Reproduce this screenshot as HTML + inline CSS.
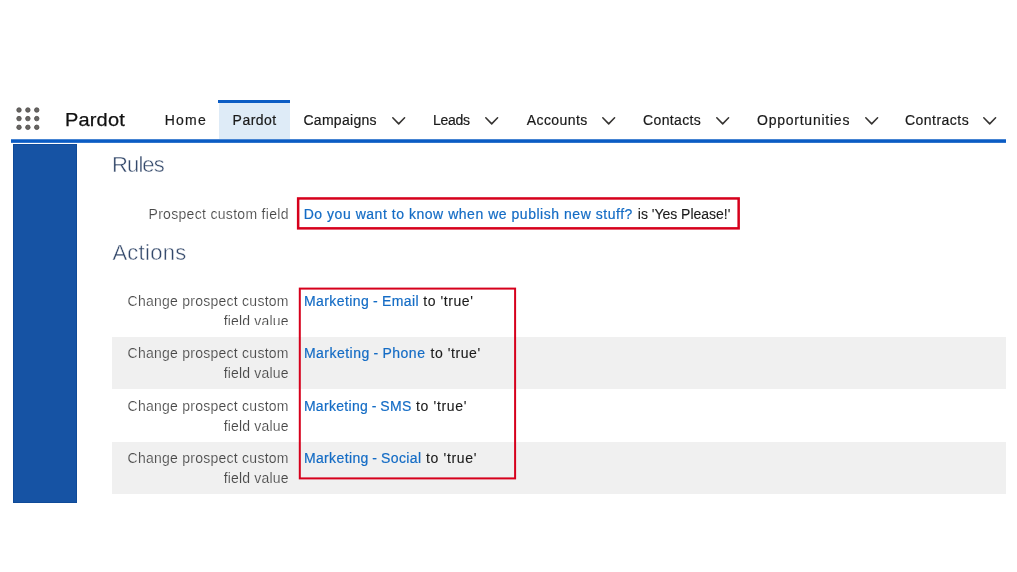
<!DOCTYPE html>
<html>
<head>
<meta charset="utf-8">
<title>Pardot</title>
<style>
html,body{margin:0;padding:0;background:#fff;}
body{width:1017px;height:572px;position:relative;overflow:hidden;font-family:"Liberation Sans",sans-serif;color:#1b1b1b;}
#wrap{position:absolute;left:0;top:0;width:1017px;height:572px;will-change:transform;}
.abs{position:absolute;white-space:nowrap;}
#topline{left:11px;top:139px;width:995px;height:4px;background:linear-gradient(to bottom,rgba(11,92,196,0.75) 0,rgba(11,92,196,0.75) 1px,#0b5cc4 1px,#0b5cc4 3px,rgba(11,92,196,0.85) 3px,rgba(11,92,196,0.85) 4px);}
#sidebar{left:13px;top:144px;width:64px;height:359px;background:#1653a4;box-sizing:border-box;border:1px solid #0f4a98;}
#acttab{left:219px;top:100px;width:71px;height:39px;background:#deebf7;}
#actbar{left:218px;top:100px;width:72px;height:3px;background:#0b5cc4;}
.nav{font-size:14px;color:#1a1a1a;line-height:20px;-webkit-text-stroke:0.2px #1a1a1a;}
.app{font-size:18.5px;color:#111;-webkit-text-stroke:0.25px #111;line-height:26px;transform:scaleX(1.08);transform-origin:0 0;}
.h{font-size:22px;color:#33486a;-webkit-text-stroke:0.45px #fff;line-height:28px;font-weight:normal;margin:0;}
.lbl{font-size:14px;color:#484848;-webkit-text-stroke:0.15px #fff;line-height:19.7px;text-align:right;}
.val{font-size:14px;line-height:20px;color:#1b1b1b;-webkit-text-stroke:0.12px #1b1b1b;}
.val a{color:#146cc5;text-decoration:none;-webkit-text-stroke:0.2px #146cc5;}
.ws a{word-spacing:-0.6px;}
.g{-webkit-text-stroke-color:#f0f0f0;}
.row{left:112px;width:894px;background:#f0f0f0;}
svg{position:absolute;overflow:visible;}
</style>
</head>
<body>
<div id="wrap">
<div class="abs" id="acttab"></div>
<div class="abs" id="actbar"></div>
<div class="abs" id="topline"></div>
<div class="abs" id="sidebar"></div>

<svg id="dots" style="left:16.35px;top:107.2px" width="24" height="24" viewBox="0 0 24 24" fill="#686664" stroke="#4c4a48" stroke-width="0.8">
<circle cx="3" cy="3" r="2.25"/><circle cx="11.87" cy="3" r="2.25"/><circle cx="20.74" cy="3" r="2.25"/>
<circle cx="3" cy="11.6" r="2.25"/><circle cx="11.87" cy="11.6" r="2.25"/><circle cx="20.74" cy="11.6" r="2.25"/>
<circle cx="3" cy="20.3" r="2.25"/><circle cx="11.87" cy="20.3" r="2.25"/><circle cx="20.74" cy="20.3" r="2.25"/>
</svg>

<div class="abs app" id="app" style="left:65.1px;top:107px;letter-spacing:0.16px">Pardot</div>
<div class="abs nav" id="n1" style="left:164.8px;top:110px;letter-spacing:1.2px">Home</div>
<div class="abs nav" id="n2" style="left:232.6px;top:110px;letter-spacing:0.46px">Pardot</div>
<div class="abs nav" id="n3" style="left:303.4px;top:110px;letter-spacing:0.3px">Campaigns</div>
<div class="abs nav" id="n4" style="left:432.9px;top:110px;letter-spacing:-0.24px">Leads</div>
<div class="abs nav" id="n5" style="left:526.7px;top:110px;letter-spacing:0.44px">Accounts</div>
<div class="abs nav" id="n6" style="left:643.0px;top:110px;letter-spacing:0.37px">Contacts</div>
<div class="abs nav" id="n7" style="left:757.0px;top:110px;letter-spacing:0.76px">Opportunities</div>
<div class="abs nav" id="n8" style="left:904.9px;top:110px;letter-spacing:0.49px">Contracts</div>
<svg style="left:391.8px;top:117px" width="13.4" height="7.8" viewBox="0 0 13.4 7.8"><path d="M0.8 0.8 L6.7 6.9 L12.6 0.8" fill="none" stroke="#363432" stroke-width="1.55" stroke-linecap="round" stroke-linejoin="round"/></svg><svg style="left:485.4px;top:117px" width="13.4" height="7.8" viewBox="0 0 13.4 7.8"><path d="M0.8 0.8 L6.7 6.9 L12.6 0.8" fill="none" stroke="#363432" stroke-width="1.55" stroke-linecap="round" stroke-linejoin="round"/></svg><svg style="left:602.4px;top:117px" width="13.4" height="7.8" viewBox="0 0 13.4 7.8"><path d="M0.8 0.8 L6.7 6.9 L12.6 0.8" fill="none" stroke="#363432" stroke-width="1.55" stroke-linecap="round" stroke-linejoin="round"/></svg><svg style="left:715.7px;top:117px" width="13.4" height="7.8" viewBox="0 0 13.4 7.8"><path d="M0.8 0.8 L6.7 6.9 L12.6 0.8" fill="none" stroke="#363432" stroke-width="1.55" stroke-linecap="round" stroke-linejoin="round"/></svg><svg style="left:864.5px;top:117px" width="13.4" height="7.8" viewBox="0 0 13.4 7.8"><path d="M0.8 0.8 L6.7 6.9 L12.6 0.8" fill="none" stroke="#363432" stroke-width="1.55" stroke-linecap="round" stroke-linejoin="round"/></svg><svg style="left:982.9px;top:117px" width="13.4" height="7.8" viewBox="0 0 13.4 7.8"><path d="M0.8 0.8 L6.7 6.9 L12.6 0.8" fill="none" stroke="#363432" stroke-width="1.55" stroke-linecap="round" stroke-linejoin="round"/></svg>

<h2 class="abs h" id="h1" style="left:112.1px;top:151px;letter-spacing:-0.91px">Rules</h2>
<div class="abs lbl" id="l0" style="left:148.5px;top:205px;letter-spacing:0.31px">Prospect custom field</div>
<div class="abs val" id="v0a" style="left:303.7px;top:204px;letter-spacing:0.53px"><a>Do you want to know when we publish new stuff?</a></div><div class="abs val" id="v0b" style="left:637.8px;top:204px;letter-spacing:-0.01px">is 'Yes Please!'</div>
<svg style="left:0;top:0" width="1017" height="572"><rect x="298.15" y="198.45" width="440.5" height="29.9" fill="none" stroke="#d6001c" stroke-width="2.5"/></svg>

<h2 class="abs h" id="h2" style="left:112.4px;top:239px;letter-spacing:0.27px">Actions</h2>

<div class="abs row" style="top:337px;height:52px"></div>
<div class="abs row" style="top:442px;height:52px"></div>

<div class="abs lbl" id="l1a" style="left:127.6px;top:292px;letter-spacing:0.25px">Change prospect custom</div>
<div class="abs lbl" id="l1b" style="left:223.8px;top:312px;letter-spacing:0.16px;height:12.8px;overflow:hidden">field value</div>
<div class="abs lbl g" id="l2a" style="left:127.6px;top:344px;letter-spacing:0.25px">Change prospect custom</div>
<div class="abs lbl g" id="l2b" style="left:223.8px;top:364px;letter-spacing:0.16px">field value</div>
<div class="abs lbl" id="l3a" style="left:127.6px;top:397px;letter-spacing:0.25px">Change prospect custom</div>
<div class="abs lbl" id="l3b" style="left:223.8px;top:417px;letter-spacing:0.16px">field value</div>
<div class="abs lbl g" id="l4a" style="left:127.6px;top:449px;letter-spacing:0.25px">Change prospect custom</div>
<div class="abs lbl g" id="l4b" style="left:223.8px;top:469px;letter-spacing:0.16px">field value</div>

<div class="abs val ws" id="v1a" style="left:303.9px;top:291px;letter-spacing:0.44px"><a>Marketing - Email</a></div><div class="abs val" id="v1b" style="left:423.3px;top:291px;letter-spacing:0.57px">to 'true'</div>
<div class="abs val ws" id="v2a" style="left:303.9px;top:343px;letter-spacing:0.49px"><a>Marketing - Phone</a></div><div class="abs val" id="v2b" style="left:430.5px;top:343px;letter-spacing:0.57px">to 'true'</div>
<div class="abs val ws" id="v3a" style="left:303.9px;top:396px;letter-spacing:0.31px"><a>Marketing - SMS</a></div><div class="abs val" id="v3b" style="left:416.0px;top:396px;letter-spacing:0.67px">to 'true'</div>
<div class="abs val ws" id="v4a" style="left:303.9px;top:448px;letter-spacing:0.37px"><a>Marketing - Social</a></div><div class="abs val" id="v4b" style="left:426.0px;top:448px;letter-spacing:0.68px">to 'true'</div>

<svg style="left:0;top:0" width="1017" height="572"><rect x="299.8" y="288.6" width="215.3" height="189.8" fill="none" stroke="#d6001c" stroke-width="2"/></svg>
</div>
</body>
</html>
